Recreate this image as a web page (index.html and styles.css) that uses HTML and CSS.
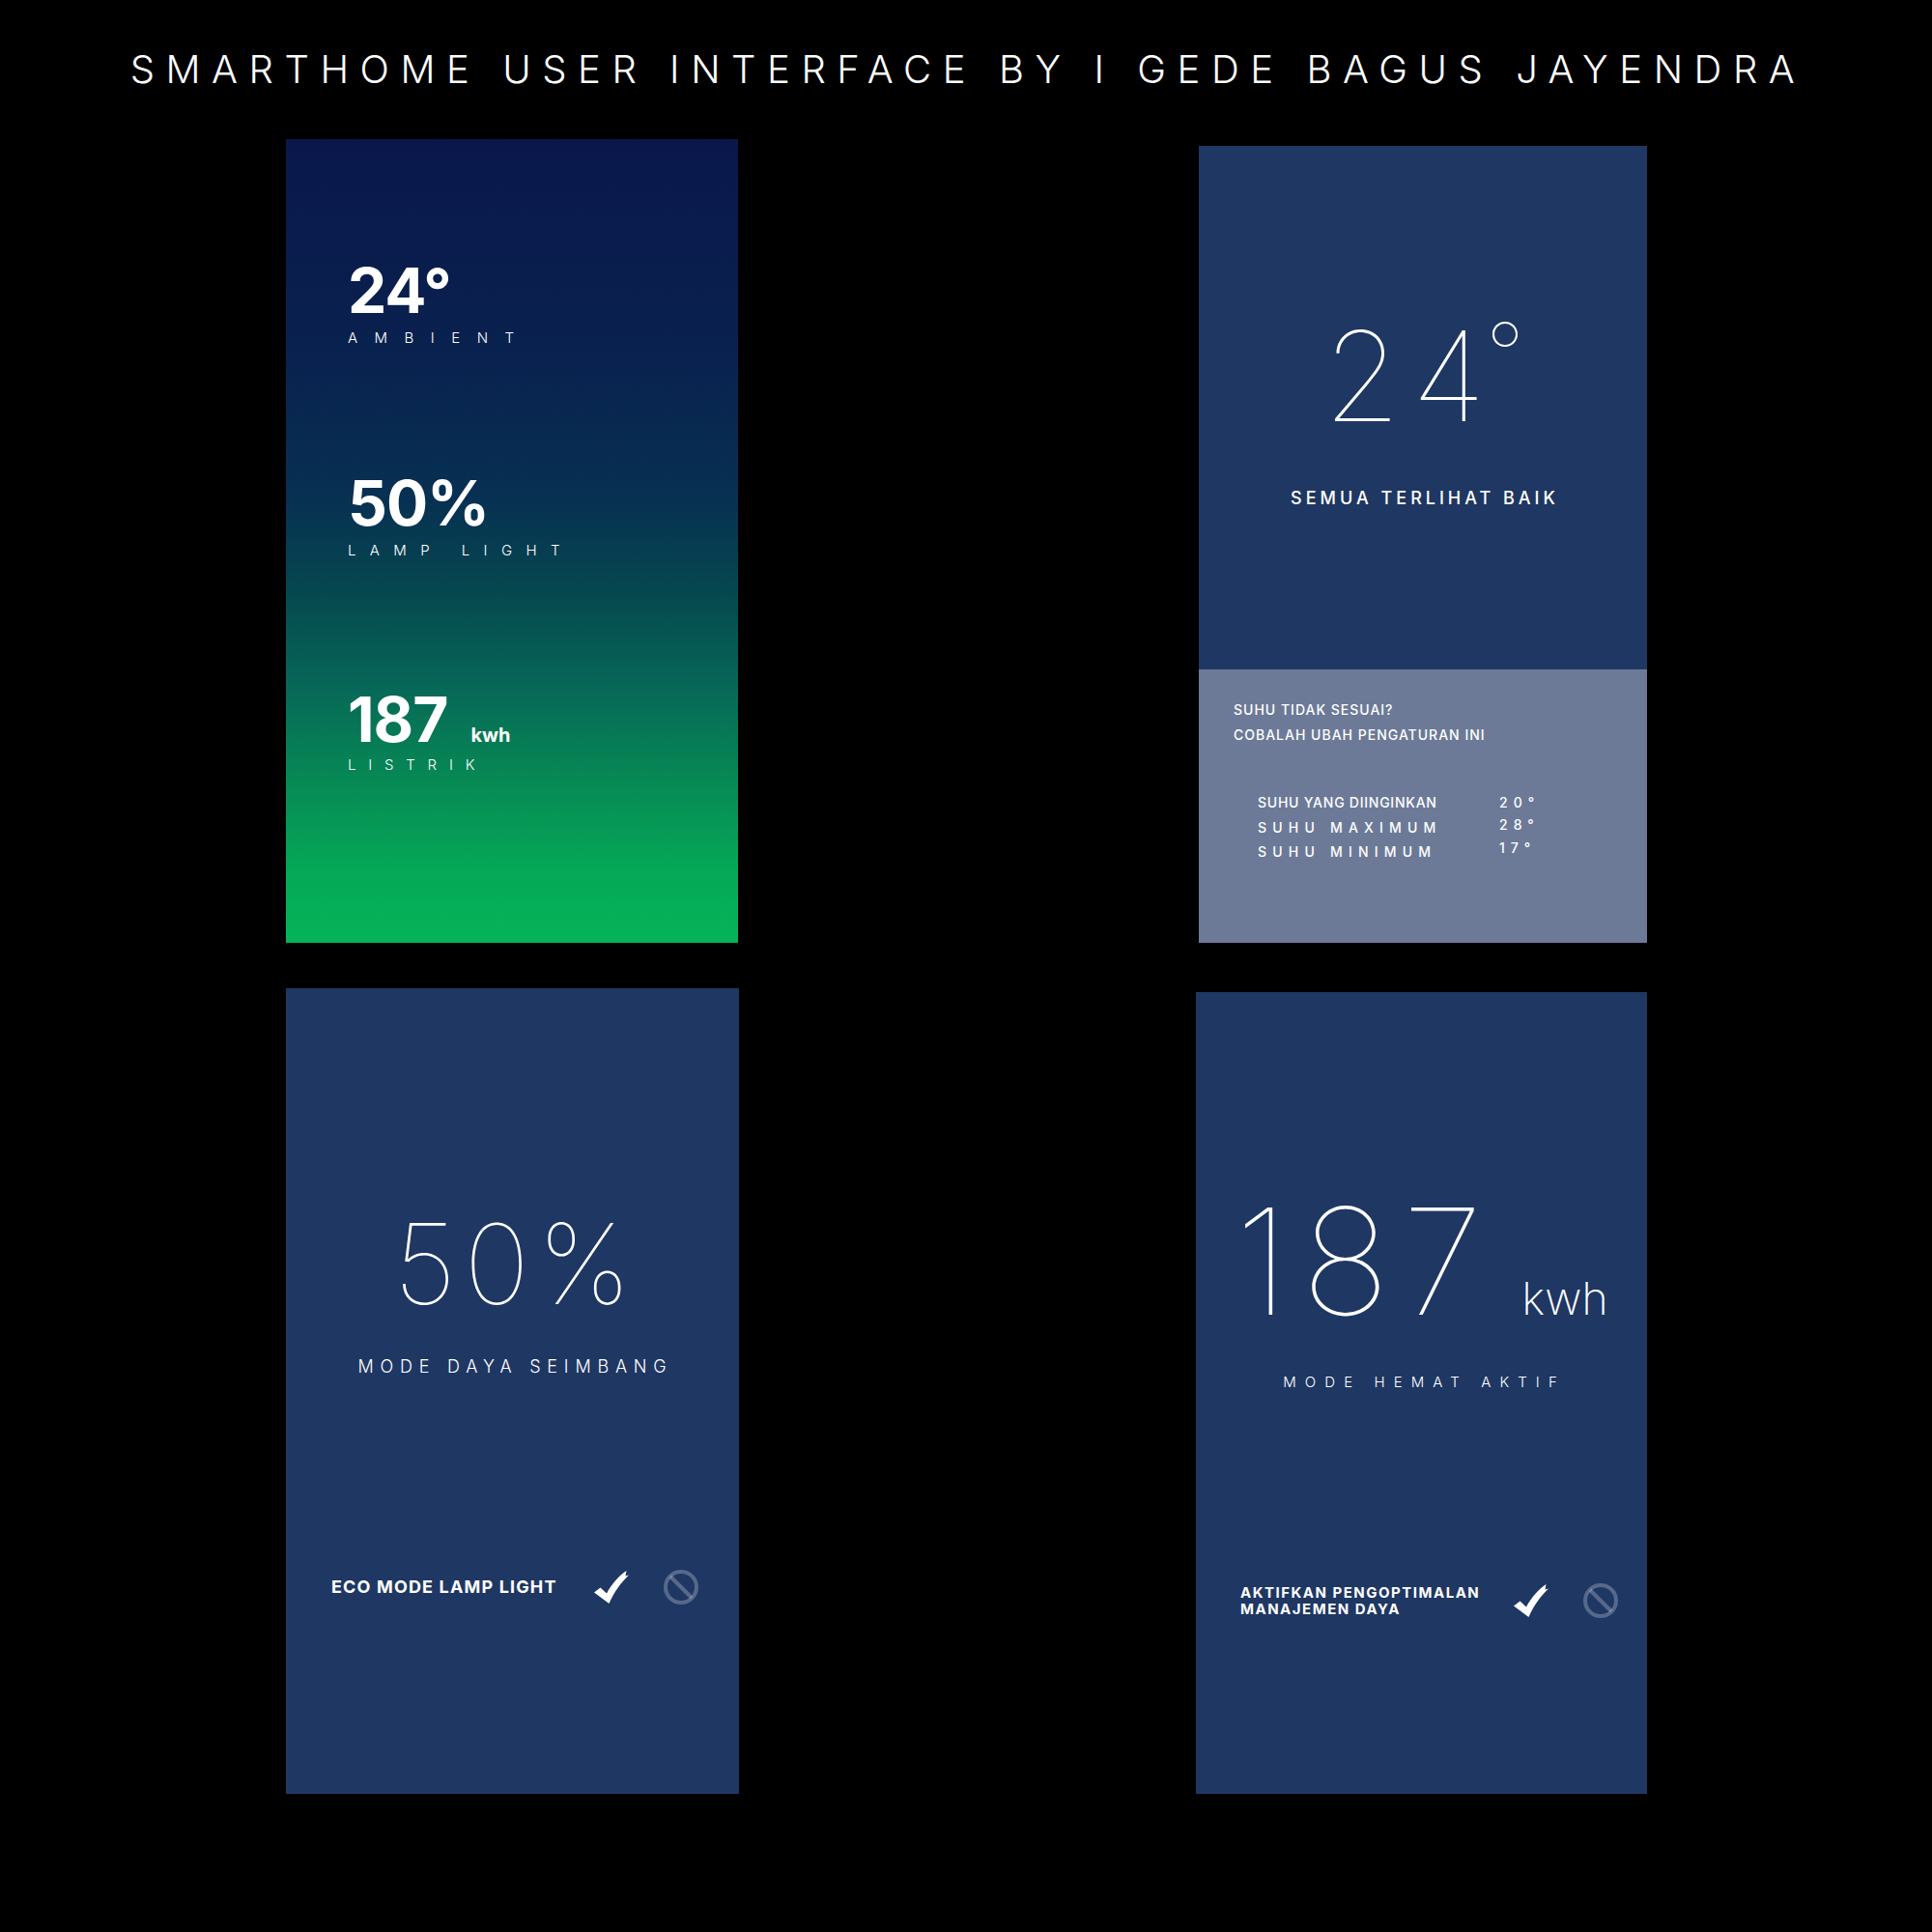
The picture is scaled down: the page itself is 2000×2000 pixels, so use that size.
FILE: index.html
```html
<!DOCTYPE html>
<html lang="id">
<head>
<meta charset="utf-8">
<title>Smarthome UI</title>
<link rel="stylesheet" href="styles.css">
</head>
<body>
<div class="page">
  <h1 class="title">SMARTHOME USER INTERFACE BY I GEDE BAGUS JAYENDRA</h1>
  <div class="board">
    <section class="panel panel-stats">
      <div class="stat">
        <div class="stat-value">24°</div>
        <div class="stat-label stat-label-ambient">AMBIENT</div>
      </div>
      <div class="stat">
        <div class="stat-value">50%</div>
        <div class="stat-label stat-label-lamp">LAMP LIGHT</div>
      </div>
      <div class="stat stat-last">
        <div class="stat-value">187<span class="stat-unit">kwh</span></div>
        <div class="stat-label stat-label-power">LISTRIK</div>
      </div>
    </section>

    <section class="panel panel-temp">
      <div class="temp-top">
        <div class="temp-value"><span class="temp-first">2</span><span class="temp-second">4</span><span class="temp-deg">°</span></div>
        <div class="temp-status">SEMUA TERLIHAT BAIK</div>
      </div>
      <div class="temp-bottom">
        <p class="hint">SUHU TIDAK SESUAI?</p>
        <p class="hint">COBALAH UBAH PENGATURAN INI</p>
        <div class="settings">
          <span class="set-label">SUHU YANG DIINGINKAN</span><span class="set-value set-value-1">20°</span>
          <span class="set-label set-label-wide">SUHU MAXIMUM</span><span class="set-value set-value-2">28°</span>
          <span class="set-label set-label-wide">SUHU MINIMUM</span><span class="set-value set-value-3">17°</span>
        </div>
      </div>
    </section>

    <section class="panel panel-lamp">
      <div class="big-value big-value-lamp">50%</div>
      <div class="big-label big-label-lamp">MODE DAYA SEIMBANG</div>
      <div class="toggle-row toggle-row-lamp">
        <div class="toggle-label toggle-label-lamp">ECO MODE LAMP LIGHT</div>
        <svg class="icon-check" viewBox="0 0 36 34" aria-hidden="true"><path d="M0 22.5 L6.5 17.5 L13 23.5 C18 14 25 6 33.5 0 L32.5 5.5 L36 4.5 C28 12 20.5 22.5 15.5 34 Z" fill="#ffffff"/></svg>
        <svg class="icon-ban" viewBox="0 0 36 36" aria-hidden="true"><circle cx="18" cy="18" r="16" fill="none" stroke="rgba(255,255,255,0.25)" stroke-width="4"/><line x1="7" y1="7" x2="29" y2="29" stroke="rgba(255,255,255,0.25)" stroke-width="4"/></svg>
      </div>
    </section>

    <section class="panel panel-power">
      <div class="big-value big-value-power">187<span class="big-unit">kwh</span></div>
      <div class="big-label big-label-power">MODE HEMAT AKTIF</div>
      <div class="toggle-row toggle-row-power">
        <div class="toggle-label toggle-label-power">AKTIFKAN PENGOPTIMALAN<br>MANAJEMEN DAYA</div>
        <svg class="icon-check" viewBox="0 0 36 34" aria-hidden="true"><path d="M0 22.5 L6.5 17.5 L13 23.5 C18 14 25 6 33.5 0 L32.5 5.5 L36 4.5 C28 12 20.5 22.5 15.5 34 Z" fill="#ffffff"/></svg>
        <svg class="icon-ban" viewBox="0 0 36 36" aria-hidden="true"><circle cx="18" cy="18" r="16" fill="none" stroke="rgba(255,255,255,0.25)" stroke-width="4"/><line x1="7" y1="7" x2="29" y2="29" stroke="rgba(255,255,255,0.25)" stroke-width="4"/></svg>
      </div>
    </section>
  </div>
</div>
</body>
</html>
```

FILE: styles.css
```css
* { box-sizing: border-box; }

html, body {
  margin: 0;
  padding: 0;
  background: #000000;
}

body {
  width: 2000px;
  height: 2000px;
  color: #ffffff;
  font-family: "Inter", "Liberation Sans", sans-serif;
}

.page {
  width: 2000px;
  height: 2000px;
  padding-top: 52px;
}

.title {
  margin: 0;
  font-size: 40px;
  line-height: 40px;
  font-weight: 300;
  letter-spacing: 11.55px;
  text-align: center;
  padding-left: 4px;
}

.board {
  margin-top: 52px;
  margin-left: 296px;
  display: grid;
  grid-template-columns: 469px 467px;
  column-gap: 473px;
  row-gap: 47px;
  align-items: start;
}

.panel {
  background: #1f3763;
}

/* Panel 1: gradient stats */
.panel-stats {
  width: 468px;
  height: 832px;
  background: linear-gradient(180deg, #0a174b 0%, #09224f 28%, #073152 45%, #05474f 56%, #076457 67%, #078a55 80%, #05a857 91%, #05b459 100%);
  padding: 125px 0 0 64px;
  display: flex;
  flex-direction: column;
  gap: 129px;
}

.stat {
  display: flex;
  flex-direction: column;
  gap: 7px;
}

.stat-last {
  margin-top: 4px;
}

.stat-value {
  font-size: 64px;
  line-height: 64px;
  font-weight: 700;
  letter-spacing: -1px;
  display: flex;
  align-items: baseline;
}

.stat-unit {
  font-size: 20px;
  line-height: 20px;
  font-weight: 700;
  letter-spacing: 0;
  margin-left: 24px;
}

.stat-label {
  font-size: 15px;
  line-height: 20px;
  font-weight: 300;
}

.stat-label-ambient {
  letter-spacing: 17.5px;
}

.stat-label-lamp {
  letter-spacing: 14.4px;
}

.stat-label-power {
  letter-spacing: 12.8px;
  margin-top: -2px;
}

/* Panel 2: temperature */
.panel-temp {
  width: 464px;
  height: 825px;
  margin-left: 3px;
  margin-top: 7px;
  display: flex;
  flex-direction: column;
}

.temp-top {
  height: 542px;
  padding-top: 173px;
  display: flex;
  flex-direction: column;
  align-items: center;
}

.temp-value {
  font-size: 129px;
  line-height: 130px;
  font-weight: 100;
  display: flex;
  align-items: flex-start;
  padding-left: 2px;
}

.temp-first {
  margin-right: 11px;
}

.temp-deg {
  font-size: 88px;
  line-height: 88px;
  margin-top: -2px;
  margin-left: 0;
}

.temp-status {
  margin-top: 50px;
  font-size: 18px;
  line-height: 24px;
  font-weight: 500;
  letter-spacing: 4px;
  padding-left: 4px;
}

.temp-bottom {
  flex: 1;
  background: #6c7a98;
  padding: 29px 0 0 36px;
}

.hint {
  margin: 0;
  font-size: 14px;
  line-height: 26px;
  font-weight: 500;
  letter-spacing: 1px;
}

.settings {
  margin-top: 44px;
  margin-left: 25px;
  display: grid;
  grid-template-columns: 250px auto;
  font-size: 14px;
  line-height: 25.5px;
  font-weight: 500;
}

.set-label {
  letter-spacing: 0.75px;
}

.set-label-wide {
  letter-spacing: 6.2px;
}

.set-value {
  letter-spacing: 6px;
  position: relative;
}

.set-value-1 { top: 0; }
.set-value-2 { top: -3px; }
.set-value-3 { top: -4px; }

/* Panels 3 & 4 */
.panel-lamp {
  width: 469px;
  height: 834px;
  display: flex;
  flex-direction: column;
  align-items: center;
}

.panel-power {
  width: 467px;
  height: 830px;
  margin-top: 4px;
  display: flex;
  flex-direction: column;
  align-items: center;
}

.big-value {
  font-weight: 100;
  display: flex;
  align-items: baseline;
}

.big-value-lamp {
  margin-top: 228px;
  font-size: 115px;
  line-height: 116px;
  letter-spacing: 8px;
  padding-left: 8px;
}

.big-value-power {
  margin-top: 202px;
  font-size: 153px;
  line-height: 154px;
  letter-spacing: 13px;
}

.big-unit {
  font-size: 47px;
  line-height: 47px;
  font-weight: 200;
  letter-spacing: 0;
  margin-left: 27px;
}

.big-label {
  font-weight: 300;
}

.big-label-lamp {
  margin-top: 36px;
  font-size: 18px;
  line-height: 24px;
  letter-spacing: 6.8px;
  padding-left: 6px;
}

.big-label-power {
  margin-top: 38px;
  font-size: 15px;
  line-height: 20px;
  letter-spacing: 9.1px;
  padding-left: 6px;
}

.toggle-row {
  align-self: stretch;
  display: flex;
  align-items: center;
  height: 36px;
}

.toggle-row-lamp {
  margin-top: 198px;
  padding-left: 47px;
}

.toggle-row-power {
  margin-top: 198px;
  padding-left: 46px;
}

.toggle-label {
  font-weight: 700;
}

.toggle-label-lamp {
  width: 272px;
  font-size: 18px;
  line-height: 24px;
  letter-spacing: 1.15px;
}

.toggle-label-power {
  width: 283px;
  font-size: 15px;
  line-height: 17.5px;
  letter-spacing: 1.5px;
}

.icon-check {
  width: 36px;
  height: 34px;
  flex: none;
}

.icon-ban {
  width: 36px;
  height: 36px;
  flex: none;
  margin-left: 36px;
}
```
